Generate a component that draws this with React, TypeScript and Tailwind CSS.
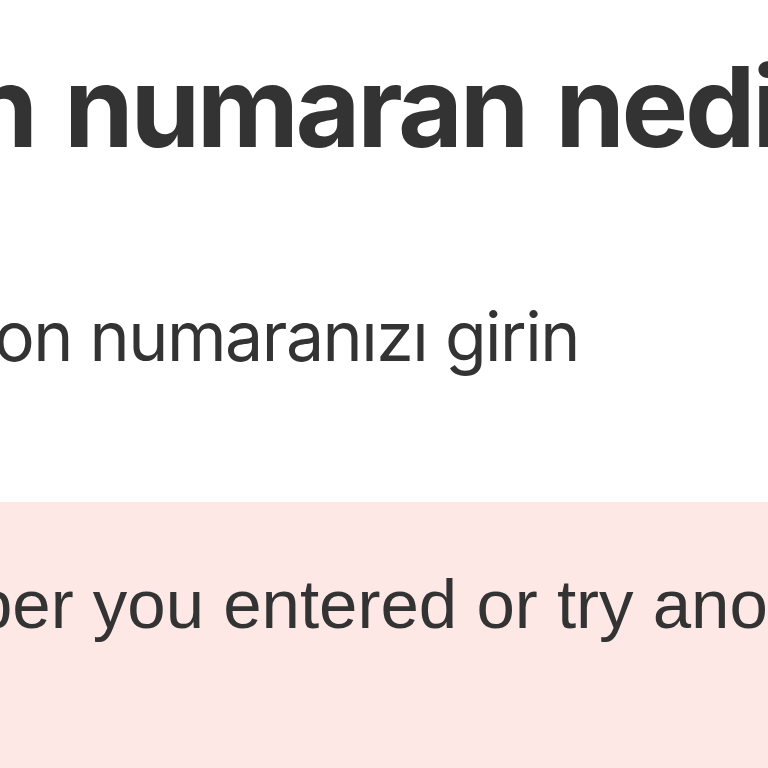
export default function App() {
  return (
    <div className="w-[768px] h-[768px] overflow-hidden bg-white flex flex-col text-[#333333]">
      <div className="pt-[50px] overflow-hidden whitespace-nowrap">
        <div
          className="ml-[-352px] text-[112px] leading-none font-bold tracking-[-0.03em] [word-spacing:6px]"
          style={{ fontFamily: 'Inter, "Noto Sans", sans-serif' }}
        >
          Telefon numaran nedir?
        </div>
      </div>
      <div className="pt-[140px] pb-[20px] overflow-hidden whitespace-nowrap">
        <div
          className="ml-[-156px] text-[68px] leading-none font-normal tracking-[-0.022em]"
          style={{ fontFamily: 'Inter, "Noto Sans", sans-serif' }}
        >
          Telefon numaranızı girin
        </div>
      </div>
      <div className="mt-[112px] flex-1 bg-[#fde8e6] pt-[68px] overflow-hidden whitespace-nowrap">
        <div
          className="ml-[-705px] text-[69px] leading-none font-normal"
          style={{ fontFamily: '"Liberation Sans", Arial, sans-serif' }}
        >
          Please check the number you entered or try another one
        </div>
      </div>
    </div>
  );
}
